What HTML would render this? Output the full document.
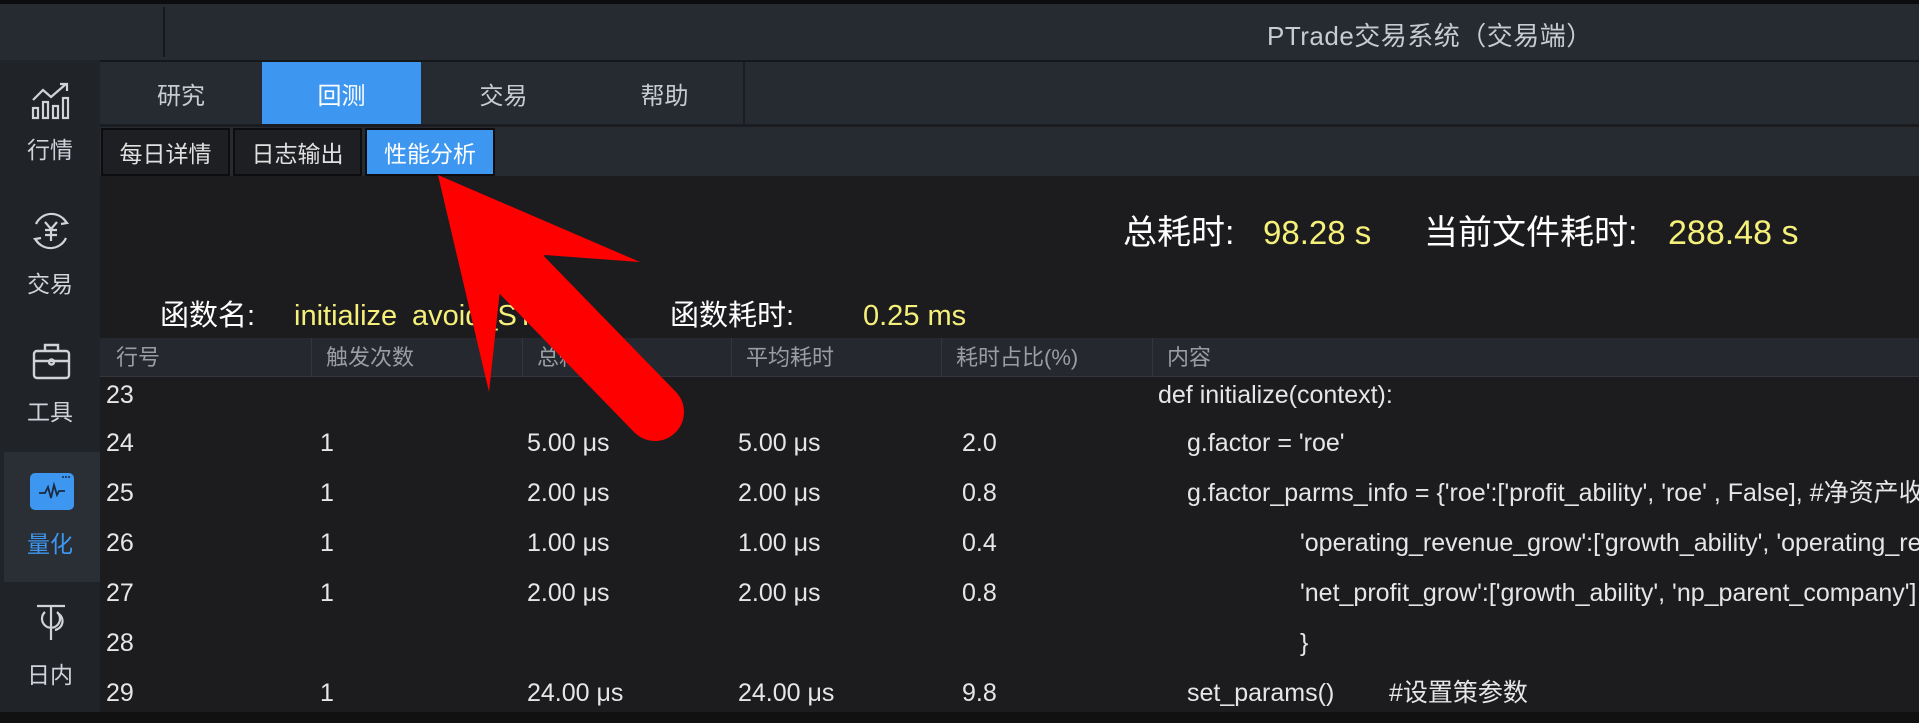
<!DOCTYPE html>
<html><head><meta charset="utf-8"><style>
*{margin:0;padding:0;box-sizing:border-box}
body{width:1919px;height:723px;overflow:hidden;background:#1c1c1f;font-family:"Liberation Sans","Noto Sans CJK SC",sans-serif;color:#e6e6e6;position:relative}
.abs{position:absolute}
.title{left:0;top:0;width:1919px;height:60px;background:#262a31;border-top:4px solid #0c0c0e}
.side{left:0;top:60px;width:100px;height:652px;background:#202328}
.bot{left:0;top:712px;width:1919px;height:11px;background:#111}
.tab{top:62px;height:62px;background:#262a31;color:#c8cbd0;font-size:24px;display:flex;align-items:center;justify-content:center}
.sub{top:128px;height:48px;background:#1e1f22;border:2px solid #0d0d0f;color:#e0e0e0;font-size:23px;display:flex;align-items:center;justify-content:center}
.blue{background:#3d97f0;color:#fff}
.si{width:100px;text-align:center;font-size:23px;color:#d0d3d8}
.hd{top:338px;left:100px;width:1819px;height:39px;background:#25282e;border-bottom:1px solid #33363c}
.hc{top:338px;height:39px;line-height:39px;font-size:22px;color:#9a9da3;padding-left:14px;border-left:1px solid #33363c}
.r{font-size:25px;line-height:30px;white-space:nowrap}
.big{font-size:34px;line-height:40px;white-space:nowrap;top:213px;color:#fff}
.fn{font-size:29px;line-height:40px;white-space:nowrap;top:296px;color:#fff}
.abs.y{color:#f5f07a}
</style></head><body>
<div class="abs title"></div>
<div class="abs" style="left:163px;top:7px;width:2px;height:50px;background:#15171a"></div>
<div class="abs" style="left:1267px;top:16px;font-size:26px;color:#c8cbd0;white-space:nowrap;letter-spacing:0.5px">PTrade交易系统（交易端）</div>
<div class="abs" style="left:100px;top:60px;width:1819px;height:2px;background:#15171a"></div>
<div class="abs" style="left:100px;top:62px;width:1819px;height:114px;background:#262a31"></div>
<div class="abs" style="left:100px;top:124px;width:1819px;height:3px;background:#1a1c20"></div>
<div class="abs side"></div>
<div class="abs bot"></div>

<div class="abs tab" style="left:102px;width:158px">研究</div>
<div class="abs tab blue" style="left:262px;width:159px">回测</div>
<div class="abs tab" style="left:423px;width:161px">交易</div>
<div class="abs tab" style="left:586px;width:159px;border-right:2px solid #1a1c20">帮助</div>

<div class="abs sub" style="left:101px;width:129px">每日详情</div>
<div class="abs sub" style="left:233px;width:129px">日志输出</div>
<div class="abs sub blue" style="left:365px;width:130px">性能分析</div>

<!-- sidebar -->
<svg class="abs" style="left:30px;top:80px" width="42" height="40" viewBox="0 0 42 40" fill="none" stroke="#d0d3d8" stroke-width="2.2"><path d="M3 20 L13 10 L21 17 L36 4 M30 4 H37 V11"/><rect x="3" y="28" width="5" height="10"/><rect x="13" y="22" width="5" height="16"/><rect x="23" y="26" width="5" height="12"/><rect x="33" y="18" width="5" height="20"/></svg>
<div class="abs si" style="top:131px">行情</div>
<svg class="abs" style="left:30px;top:210px" width="42" height="42" viewBox="0 0 42 42" fill="none" stroke="#d0d3d8" stroke-width="2.2"><path d="M6 14 A17 17 0 0 1 36 12 M36 28 A17 17 0 0 1 6 30"/><path d="M33 8 L37 13 L31 14 M9 34 L5 29 L11 28"/><path d="M15 12 L21 19 L27 12 M21 19 V31 M15 20 H27 M15 25 H27"/></svg>
<div class="abs si" style="top:265px">交易</div>
<svg class="abs" style="left:32px;top:342px" width="40" height="38" viewBox="0 0 40 38" fill="none" stroke="#d0d3d8" stroke-width="2.4"><rect x="2" y="9" width="35" height="27" rx="3"/><path d="M13 9 V3 H26 V9 M2 19 H37"/><circle cx="19.5" cy="20" r="2.5"/></svg>
<div class="abs si" style="top:393px">工具</div>
<div class="abs" style="left:4px;top:452px;width:96px;height:130px;background:#2a2e35"></div>
<svg class="abs" style="left:30px;top:473px" width="44" height="37" viewBox="0 0 44 37"><rect x="0" y="0" width="44" height="37" rx="5" fill="#3d97f0"/><path d="M9 20 H15 L18 14 L21 25 L24 12 L27 22 L29 18 H35" fill="none" stroke="#1a2a40" stroke-width="1.8"/><circle cx="33" cy="4" r="1" fill="#1a2a40"/><circle cx="36" cy="4" r="1" fill="#1a2a40"/><circle cx="39" cy="4" r="1" fill="#1a2a40"/></svg>
<div class="abs si" style="top:525px;color:#3d97f0">量化</div>
<svg class="abs" style="left:33px;top:602px" width="36" height="40" viewBox="0 0 36 40" fill="none" stroke="#d0d3d8" stroke-width="2.2"><path d="M4 4 H32 M18 4 V38 M12 10 A9 9 0 1 0 24 10 M26 12 A9 9 0 0 1 22 28"/></svg>
<div class="abs si" style="top:656px">日内</div>

<!-- totals -->
<div class="abs big" style="left:1123px">总耗时:</div>
<div class="abs big y" style="left:1263px;font-size:33px">98.28 s</div>
<div class="abs big" style="left:1424px">当前文件耗时:</div>
<div class="abs big y" style="left:1668px;font-size:34px">288.48 s</div>

<div class="abs fn" style="left:160px">函数名:</div>
<div class="abs fn y" style="left:294px">initialize</div>
<div class="abs fn y" style="left:412px">avoid_ST</div>
<div class="abs fn" style="left:670px">函数耗时:</div>
<div class="abs fn y" style="left:863px">0.25 ms</div>

<!-- header -->
<div class="abs hd"></div>
<div class="abs hc" style="left:100px;border-left:none;padding-left:16px">行号</div>
<div class="abs hc" style="left:311px">触发次数</div>
<div class="abs hc" style="left:522px">总耗时</div>
<div class="abs hc" style="left:731px">平均耗时</div>
<div class="abs hc" style="left:941px">耗时占比(%)</div>
<div class="abs hc" style="left:1152px">内容</div>

<!-- rows -->
<div class="abs r" style="left:106px;top:380px">23</div>
<div class="abs r" style="left:1158px;top:380px">def initialize(context):</div>

<div class="abs r" style="left:106px;top:428px">24</div><div class="abs r" style="left:320px;top:428px">1</div><div class="abs r" style="left:527px;top:428px">5.00 μs</div><div class="abs r" style="left:738px;top:428px">5.00 μs</div><div class="abs r" style="left:962px;top:428px">2.0</div>
<div class="abs r" style="left:1187px;top:428px">g.factor = 'roe'</div>

<div class="abs r" style="left:106px;top:478px">25</div><div class="abs r" style="left:320px;top:478px">1</div><div class="abs r" style="left:527px;top:478px">2.00 μs</div><div class="abs r" style="left:738px;top:478px">2.00 μs</div><div class="abs r" style="left:962px;top:478px">0.8</div>
<div class="abs r" style="left:1187px;top:478px">g.factor_parms_info = {'roe':['profit_ability', 'roe' , False], #净资产收益率</div>

<div class="abs r" style="left:106px;top:528px">26</div><div class="abs r" style="left:320px;top:528px">1</div><div class="abs r" style="left:527px;top:528px">1.00 μs</div><div class="abs r" style="left:738px;top:528px">1.00 μs</div><div class="abs r" style="left:962px;top:528px">0.4</div>
<div class="abs r" style="left:1300px;top:528px">'operating_revenue_grow':['growth_ability', 'operating_revenue']</div>

<div class="abs r" style="left:106px;top:578px">27</div><div class="abs r" style="left:320px;top:578px">1</div><div class="abs r" style="left:527px;top:578px">2.00 μs</div><div class="abs r" style="left:738px;top:578px">2.00 μs</div><div class="abs r" style="left:962px;top:578px">0.8</div>
<div class="abs r" style="left:1300px;top:578px">'net_profit_grow':['growth_ability', 'np_parent_company']</div>

<div class="abs r" style="left:106px;top:628px">28</div>
<div class="abs r" style="left:1300px;top:628px">}</div>

<div class="abs r" style="left:106px;top:678px">29</div><div class="abs r" style="left:320px;top:678px">1</div><div class="abs r" style="left:527px;top:678px">24.00 μs</div><div class="abs r" style="left:738px;top:678px">24.00 μs</div><div class="abs r" style="left:962px;top:678px">9.8</div>
<div class="abs r" style="left:1187px;top:678px">set_params()</div><div class="abs r" style="left:1389px;top:678px">#设置策参数</div>

<!-- red arrow -->
<svg class="abs" style="left:0;top:0" width="1919" height="723" viewBox="0 0 1919 723">
<polygon points="438,175 640,262 545,255 500,290 489,392" fill="#f00"/>
<line x1="515" y1="268" x2="655" y2="412" stroke="#f00" stroke-width="58" stroke-linecap="round"/>
</svg>
</body></html>
